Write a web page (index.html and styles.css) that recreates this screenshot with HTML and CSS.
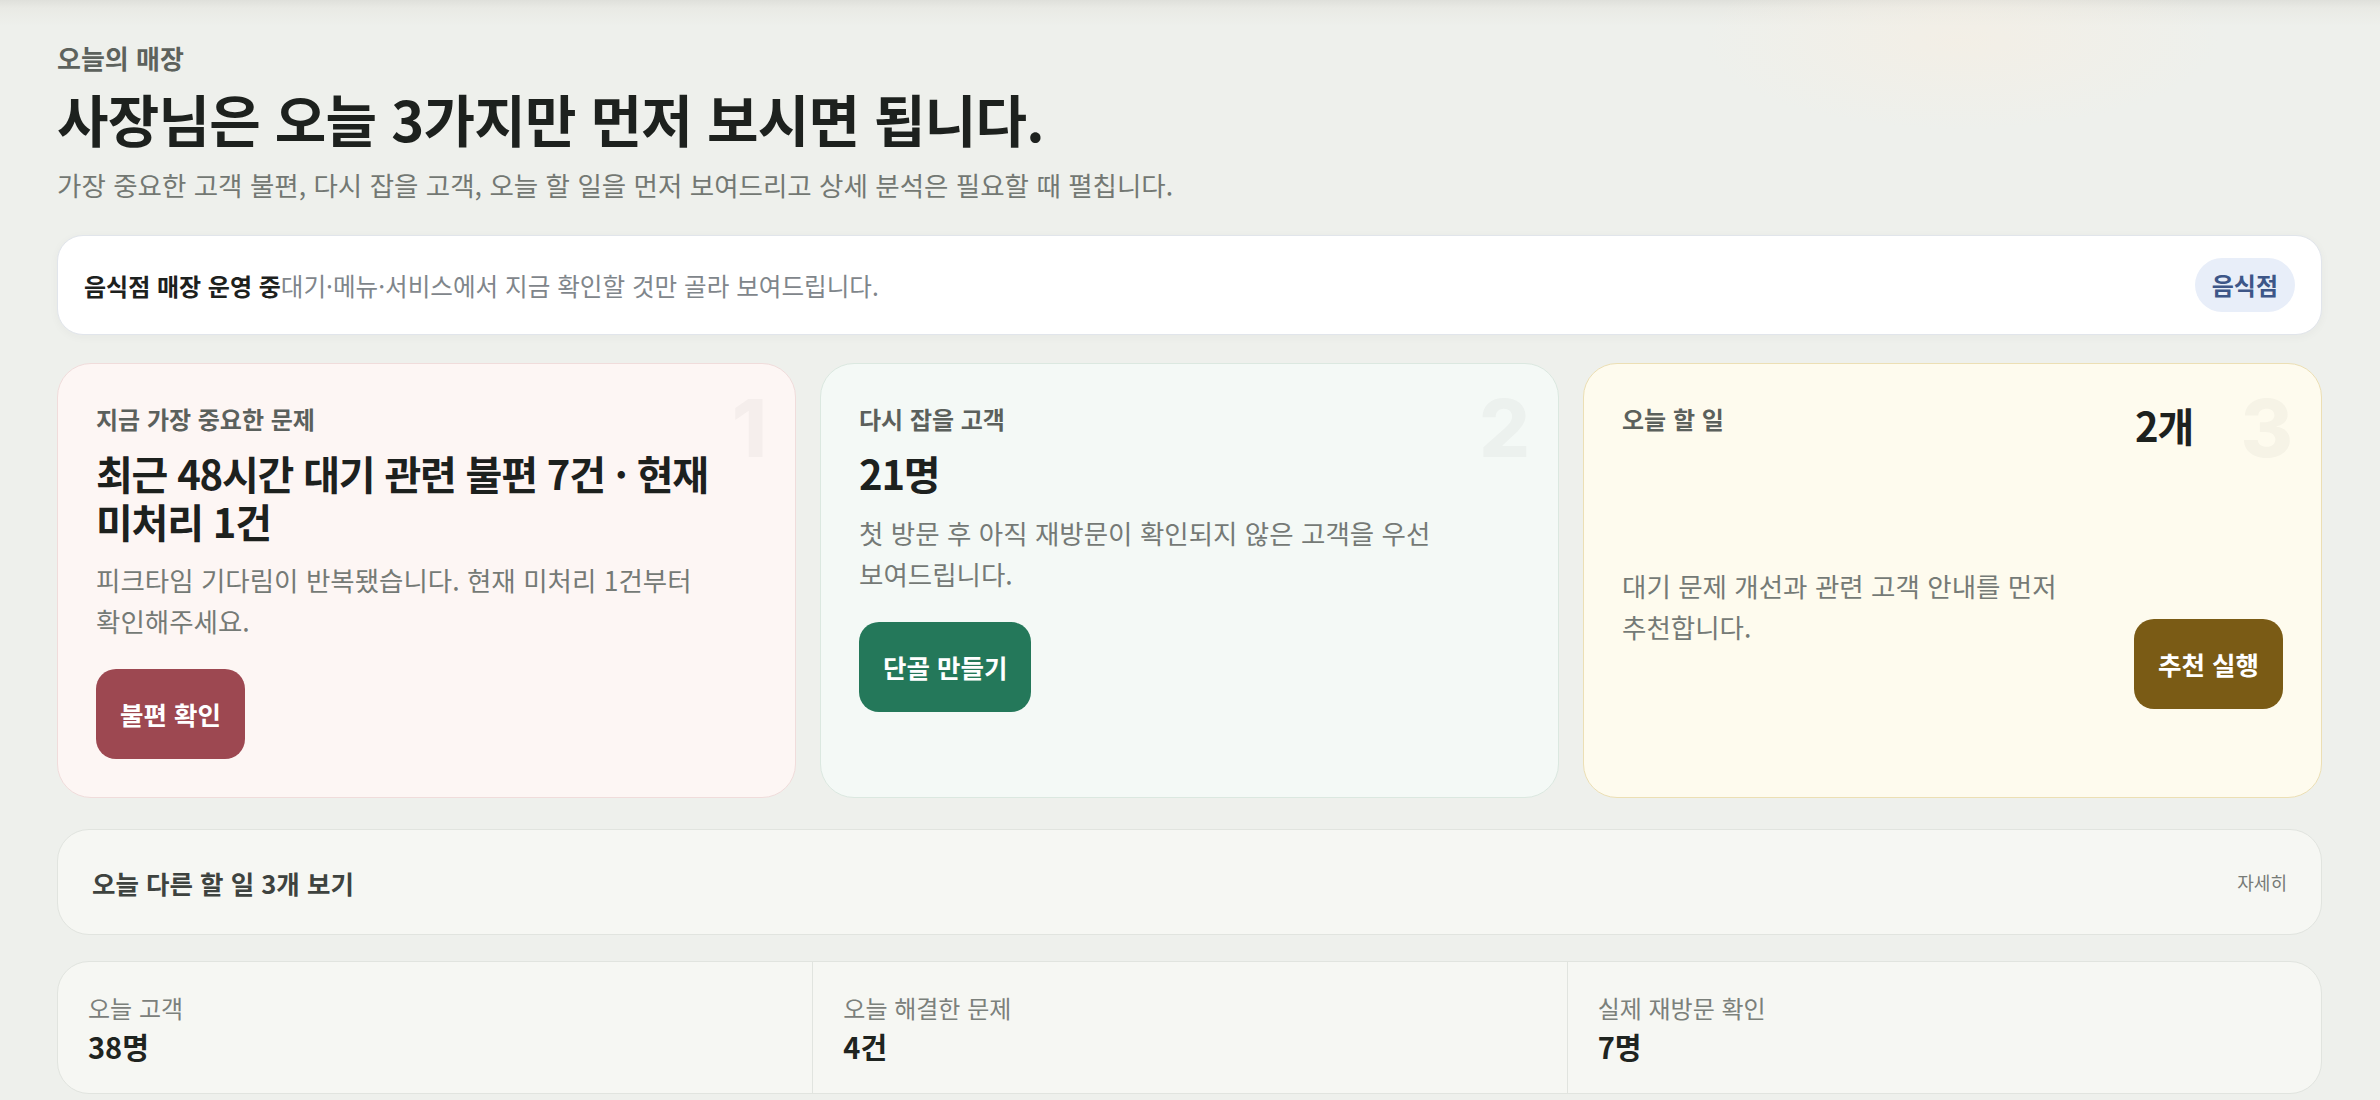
FILE: index.html
```html
<!DOCTYPE html>
<html lang="ko">
<head>
<meta charset="utf-8">
<title>오늘의 매장</title>
<link rel="stylesheet" href="styles.css">
</head>
<body>
<main class="page">
  <header class="intro">
    <p class="eyebrow">오늘의 매장</p>
    <h1 class="headline">사장님은 오늘 3가지만 먼저 보시면 됩니다.</h1>
    <p class="lead">가장 중요한 고객 불편, 다시 잡을 고객, 오늘 할 일을 먼저 보여드리고 상세 분석은 필요할 때 펼칩니다.</p>
  </header>

  <section class="banner">
    <p class="banner-text"><strong>음식점 매장 운영 중</strong><span>대기·메뉴·서비스에서 지금 확인할 것만 골라 보여드립니다.</span></p>
    <span class="pill">음식점</span>
  </section>

  <section class="cards">
    <article class="card card-issue">
      <span class="watermark">1</span>
      <p class="card-label">지금 가장 중요한 문제</p>
      <h2 class="card-title">최근 48시간 대기 관련 불편 7건 · 현재 미처리 1건</h2>
      <p class="card-desc">피크타임 기다림이 반복됐습니다. 현재 미처리 1건부터 확인해주세요.</p>
      <button class="btn btn-red">불편 확인</button>
    </article>

    <article class="card card-return">
      <span class="watermark">2</span>
      <p class="card-label">다시 잡을 고객</p>
      <h2 class="card-title">21명</h2>
      <p class="card-desc">첫 방문 후 아직 재방문이 확인되지 않은 고객을 우선 보여드립니다.</p>
      <button class="btn btn-green">단골 만들기</button>
    </article>

    <article class="card card-todo">
      <span class="watermark">3</span>
      <div class="todo-head">
        <p class="card-label">오늘 할 일</p>
        <h2 class="card-title todo-count">2개</h2>
      </div>
      <div class="todo-body">
        <p class="card-desc todo-desc">대기 문제 개선과 관련 고객 안내를 먼저 추천합니다.</p>
        <button class="btn btn-brown">추천 실행</button>
      </div>
    </article>
  </section>

  <section class="more-bar">
    <span class="more-title">오늘 다른 할 일 3개 보기</span>
    <span class="more-link">자세히</span>
  </section>

  <section class="stats">
    <div class="stat">
      <p class="stat-label">오늘 고객</p>
      <p class="stat-value">38명</p>
    </div>
    <div class="stat">
      <p class="stat-label">오늘 해결한 문제</p>
      <p class="stat-value">4건</p>
    </div>
    <div class="stat">
      <p class="stat-label">실제 재방문 확인</p>
      <p class="stat-value">7명</p>
    </div>
  </section>
</main>
</body>
</html>
```

FILE: styles.css
```css
* { box-sizing: border-box; }

html, body {
  margin: 0;
  padding: 0;
}

body {
  font-family: "Noto Sans CJK KR", "Noto Sans", sans-serif;
  color: #1f2420;
  word-break: keep-all;
  background:
    radial-gradient(ellipse 260px 90px at 1960px 40px, rgba(246, 238, 226, 0.6), rgba(246, 238, 226, 0) 100%),
    linear-gradient(180deg, #dfe0db 0px, #e9eae5 8px, #eef0ec 26px, #eef0ec 100%);
  min-height: 1100px;
}

.page {
  padding: 41px 58px 40px 57px;
}

p, h1, h2 { margin: 0; }

.eyebrow {
  font-size: 26px;
  line-height: 34px;
  font-weight: 600;
  color: #5d625d;
}

.headline {
  margin-top: 8px;
  font-size: 56px;
  line-height: 70px;
  font-weight: 700;
  letter-spacing: -0.014em;
  color: #1d211e;
}

.lead {
  margin-top: 12px;
  font-size: 26.5px;
  line-height: 40px;
  color: #737873;
}

.banner {
  margin-top: 30px;
  background: #ffffff;
  border: 1px solid #e1e5eb;
  border-radius: 26px;
  padding: 22px 26px;
  display: flex;
  align-items: center;
  justify-content: space-between;
  box-shadow: 0 2px 10px rgba(40, 50, 40, 0.04);
}

.banner-text {
  font-size: 24px;
  line-height: 32px;
  color: #7f868b;
}

.banner-text span {
  font-size: 24.6px;
}

.banner-text strong {
  color: #1d211e;
  font-weight: 700;
}

.pill {
  background: #e8eef9;
  color: #3d5688;
  font-weight: 700;
  font-size: 24px;
  line-height: 34px;
  padding: 10px 17px;
  border-radius: 999px;
}

.cards {
  margin-top: 28px;
  display: grid;
  grid-template-columns: repeat(3, 1fr);
  gap: 24px;
}

.card {
  position: relative;
  border: 1px solid;
  border-radius: 34px;
  padding: 38px;
  display: flex;
  flex-direction: column;
  align-items: flex-start;
}

.card-issue { background: #fdf6f4; border-color: #f0dcdb; }
.card-return { background: #f4f9f6; border-color: #dbe8e0; }
.card-todo { background: #fefbee; border-color: #ecdfb4; }

.watermark {
  position: absolute;
  top: 24px;
  right: 28px;
  font-size: 80px;
  line-height: 80px;
  font-weight: 800;
  color: rgba(40, 50, 40, 0.04);
  font-family: "Inter", "Noto Sans", sans-serif;
}

.card-label {
  font-size: 24px;
  line-height: 33px;
  font-weight: 600;
  color: #5b605c;
}

.card-title {
  margin-top: 15px;
  font-size: 40px;
  line-height: 47.5px;
  font-weight: 700;
  letter-spacing: -0.03em;
  color: #1d211e;
}

.card-desc {
  margin-top: 14px;
  font-size: 26.5px;
  line-height: 41px;
  color: #757a76;
}

.btn {
  margin-top: 28px;
  border: none;
  font-family: inherit;
  font-size: 25.5px;
  line-height: 32px;
  font-weight: 700;
  color: #ffffff;
  padding: 29px 24px;
  border-radius: 20px;
}

.btn-red { background: #9d4851; }
.btn-green { background: #24785a; }
.btn-brown { background: #7a5b15; }

.todo-head {
  width: 100%;
  display: flex;
  justify-content: space-between;
  align-items: flex-start;
  padding-right: 90px;
}

.todo-count { margin-top: 0; }

.todo-body {
  width: 100%;
  display: flex;
  justify-content: space-between;
  align-items: flex-start;
  margin-top: 115px;
}

.todo-desc {
  margin-top: 0;
  max-width: 470px;
}

.todo-body .btn {
  margin-top: 54px;
}

.more-bar {
  margin-top: 31px;
  height: 106px;
  background: #f6f7f3;
  border: 1px solid #e1e4df;
  border-radius: 32px;
  padding: 0 34px;
  display: flex;
  align-items: center;
  justify-content: space-between;
}

.more-title {
  font-size: 25.5px;
  font-weight: 600;
  color: #3e433f;
}

.more-link {
  font-size: 18px;
  color: #777b77;
}

.stats {
  margin-top: 26px;
  height: 133px;
  background: #f6f7f3;
  border: 1px solid #e1e4df;
  border-radius: 32px;
  display: grid;
  grid-template-columns: repeat(3, 1fr);
  overflow: hidden;
}

.stat {
  padding: 0 30px;
  display: flex;
  flex-direction: column;
  justify-content: center;
  border-left: 1px solid #e1e4df;
}

.stat:first-child { border-left: none; }

.stat-label {
  font-size: 24px;
  line-height: 32px;
  color: #7b807b;
}

.stat-value {
  margin-top: 4px;
  font-size: 29px;
  line-height: 36px;
  font-weight: 700;
  color: #1f2420;
}
```
